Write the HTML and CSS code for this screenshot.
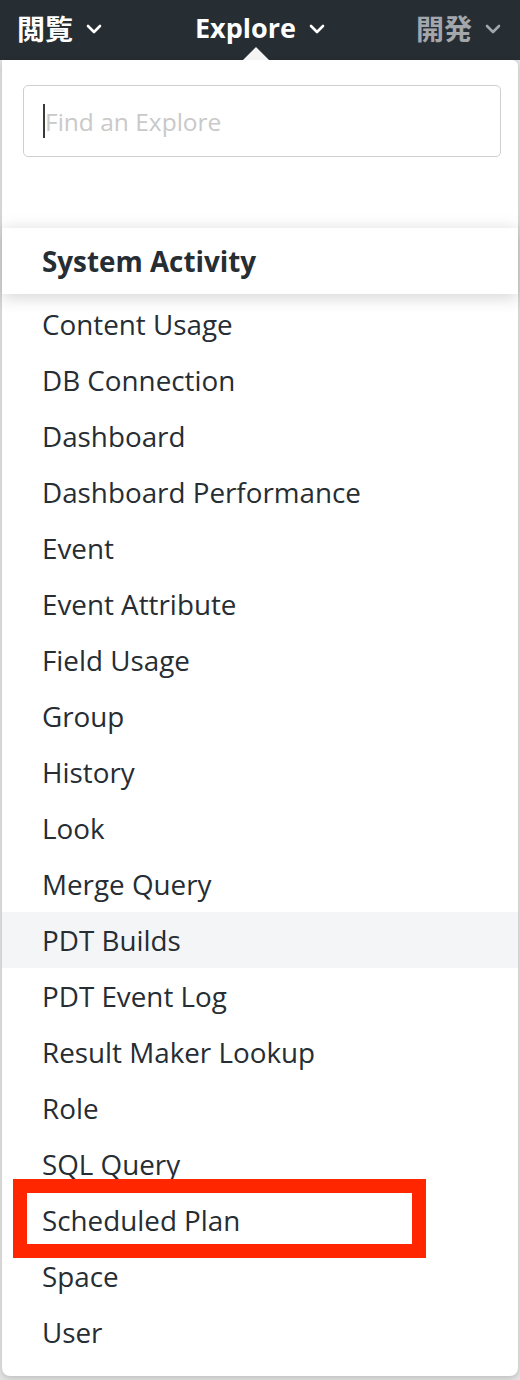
FILE: index.html
```html
<!DOCTYPE html>
<html lang="ja">
<head>
<meta charset="utf-8">
<title>Explore menu</title>
<link rel="stylesheet" href="styles.css">
</head>
<body>
<header class="topbar">
  <div class="nav-item">
    <span class="nav-label cjk">閲覧</span>
    <svg class="chev" viewBox="0 0 16 10" width="16" height="10"><path d="M2 2 L8 8 L14 2" fill="none" stroke="currentColor" stroke-width="2.6" stroke-linecap="round" stroke-linejoin="round"/></svg>
  </div>
  <div class="nav-item active">
    <span class="nav-label">Explore</span>
    <svg class="chev" viewBox="0 0 16 10" width="16" height="10"><path d="M2 2 L8 8 L14 2" fill="none" stroke="currentColor" stroke-width="2.6" stroke-linecap="round" stroke-linejoin="round"/></svg>
    <span class="caret"></span>
  </div>
  <div class="nav-item muted">
    <span class="nav-label cjk">開発</span>
    <svg class="chev" viewBox="0 0 16 10" width="16" height="10"><path d="M2 2 L8 8 L14 2" fill="none" stroke="currentColor" stroke-width="2.6" stroke-linecap="round" stroke-linejoin="round"/></svg>
  </div>
</header>

<div class="page">
  <div class="panel">
    <div class="search-wrap">
      <div class="search">
        <span class="text-cursor"></span>
        <span class="placeholder">Find an Explore</span>
      </div>
    </div>
    <div class="group-header">System Activity</div>
    <ul class="items">
      <li>Content Usage</li>
      <li>DB Connection</li>
      <li>Dashboard</li>
      <li>Dashboard Performance</li>
      <li>Event</li>
      <li>Event Attribute</li>
      <li>Field Usage</li>
      <li>Group</li>
      <li>History</li>
      <li>Look</li>
      <li>Merge Query</li>
      <li class="hover">PDT Builds</li>
      <li>PDT Event Log</li>
      <li>Result Maker Lookup</li>
      <li>Role</li>
      <li>SQL Query</li>
      <li class="marked">Scheduled Plan<span class="highlight-box"></span></li>
      <li>Space</li>
      <li>User</li>
    </ul>
  </div>
</div>
</body>
</html>
```

FILE: styles.css
```css
html, body {
  margin: 0;
  padding: 0;
}
body {
  width: 520px;
  height: 1380px;
  overflow: hidden;
  background: #ffffff;
  font-family: "Open Sans", "Noto Sans", "Noto Sans CJK JP", sans-serif;
  color: #262d33;
}
.topbar {
  height: 60px;
  background: #262d33;
  display: flex;
  align-items: center;
  justify-content: space-between;
  padding: 0 19px 0 17px;
  box-sizing: border-box;
}
.nav-item {
  position: relative;
  display: flex;
  align-items: center;
  gap: 13px;
  color: #ffffff;
  height: 60px;
  padding-bottom: 5px;
  box-sizing: border-box;
}
.nav-item.active {
  margin-left: 2px;
}
.nav-item.muted {
  color: #a3a7ab;
}
.nav-label {
  font-weight: 700;
  font-size: 27px;
  line-height: 1;
}
.nav-label.cjk {
  font-family: "Noto Sans CJK JP", "Noto Sans", sans-serif;
  font-size: 28px;
}
.chev {
  display: block;
  margin-top: 3px;
}
.caret {
  position: absolute;
  left: 48px;
  bottom: 0;
  width: 0;
  height: 0;
  border-left: 13px solid transparent;
  border-right: 13px solid transparent;
  border-bottom: 13px solid #f4f4f4;
}
.page {
  background: #e4e4e4;
  padding-left: 2px;
  height: 1320px;
}
.panel {
  width: 516px;
  background: #ffffff;
  border-radius: 0 6px 8px 8px;
  padding-bottom: 16px;
  box-shadow: 0 2px 6px rgba(0,0,0,0.18);
}
.search-wrap {
  padding: 25px 17px 71px 21px;
}
.search {
  height: 72px;
  border: 1.5px solid #cfcfcf;
  border-radius: 5px;
  box-sizing: border-box;
  display: flex;
  align-items: center;
  padding-left: 19px;
}
.text-cursor {
  width: 2px;
  height: 34px;
  background: #3a3a3a;
  margin-right: 0;
}
.placeholder {
  font-size: 24.5px;
  color: #c9c9c9;
}
.group-header {
  height: 66px;
  display: flex;
  align-items: center;
  padding-left: 40px;
  font-weight: 700;
  font-size: 27.8px;
  color: #262d33;
  box-shadow: 0 -4px 14px rgba(0,0,0,0.06), 0 6px 14px rgba(0,0,0,0.12);
  position: relative;
  margin-bottom: 2px;
}
.items {
  list-style: none;
  margin: 0;
  padding: 0;
}
.items li {
  height: 56px;
  display: flex;
  align-items: center;
  padding-left: 40px;
  font-size: 27.8px;
  color: #262d33;
}
.items li.hover {
  background: #f4f5f6;
}
.items li.marked {
  position: relative;
}
.highlight-box {
  position: absolute;
  left: 11px;
  top: -13px;
  width: 413px;
  height: 79px;
  border: 14px solid #ff2600;
  box-sizing: border-box;
}
```
